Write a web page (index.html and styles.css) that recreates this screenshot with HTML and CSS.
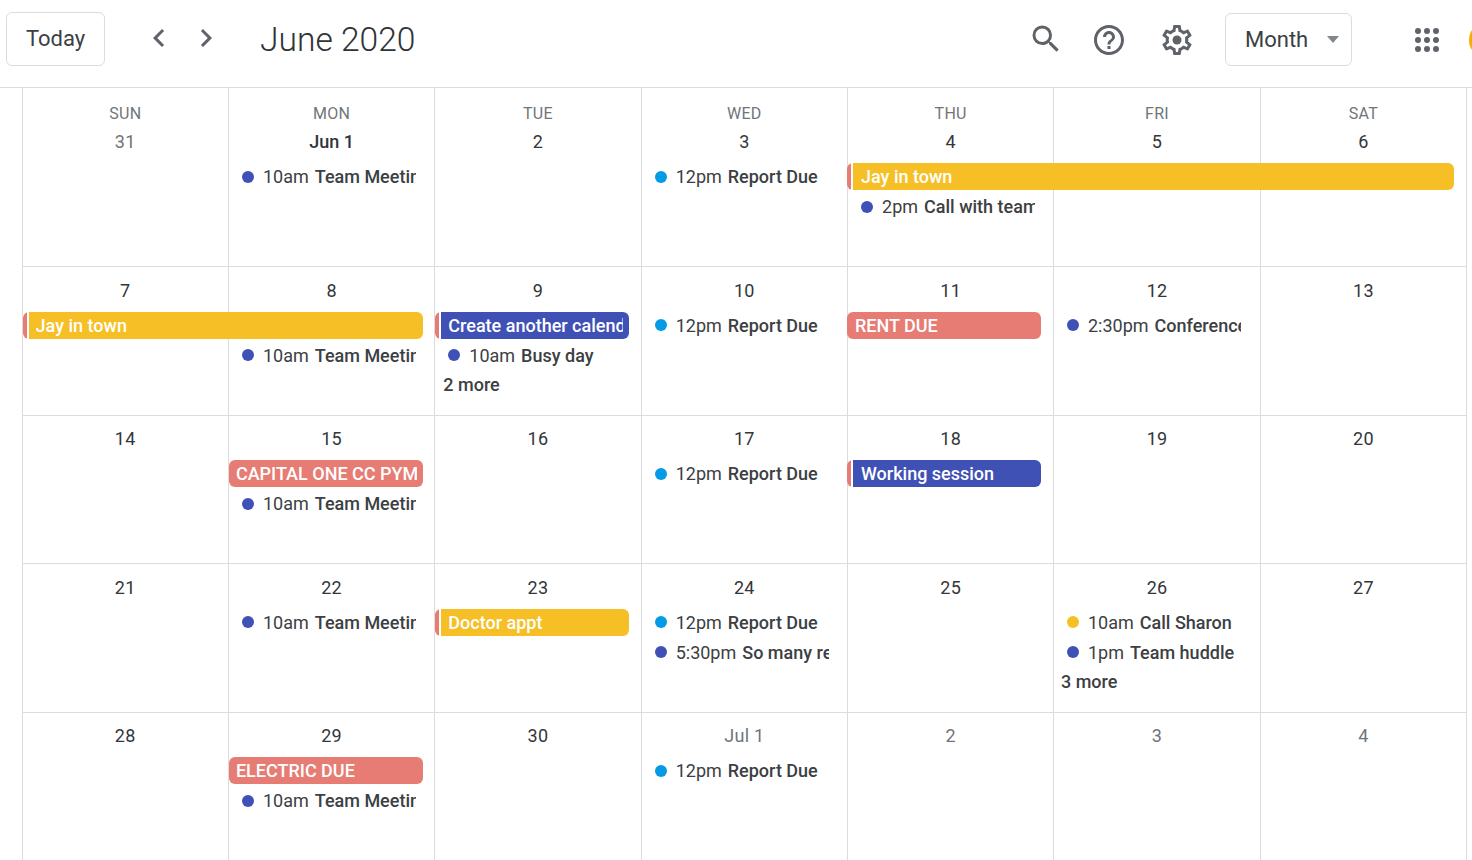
FILE: index.html
```html
<!DOCTYPE html>
<html lang="en">
<head>
  <meta charset="UTF-8" />
  <title>June 2020</title>
  <link rel="stylesheet" href="styles.css">
</head>
<body>
  <header class="toolbar">
    <button class="today-btn">Today</button>
    <svg class="icon nav-prev" viewBox="0 0 24 24"><path d="M15.41 7.41L14 6l-6 6 6 6 1.41-1.41L10.83 12z"/></svg>
    <svg class="icon nav-next" viewBox="0 0 24 24"><path d="M10 6L8.59 7.41 13.17 12l-4.58 4.59L10 18l6-6z"/></svg>
    <h1 class="month-title">June 2020</h1>

    <svg class="icon search" viewBox="0 0 24 24"><path d="M15.5 14h-.79l-.28-.27A6.471 6.471 0 0 0 16 9.5 6.5 6.5 0 1 0 9.5 16c1.61 0 3.09-.59 4.23-1.57l.27.28v.79l5 4.99L20.49 19l-4.99-5zm-6 0C7.01 14 5 11.99 5 9.5S7.01 5 9.5 5 14 7.01 14 9.5 11.99 14 9.5 14z"/></svg>
    <svg class="icon help" viewBox="0 0 24 24"><path d="M11 18h2v-2h-2v2zm1-16C6.48 2 2 6.48 2 12s4.48 10 10 10 10-4.48 10-10S17.52 2 12 2zm0 18c-4.41 0-8-3.59-8-8s3.59-8 8-8 8 3.59 8 8-3.59 8-8 8zm0-14c-2.21 0-4 1.79-4 4h2c0-1.1.9-2 2-2s2 .9 2 2c0 2-3 1.75-3 5h2c0-2.25 3-2.5 3-5 0-2.21-1.79-4-4-4z"/></svg>
    <svg class="icon gear" viewBox="0 0 24 24"><path d="M19.43 12.98c.04-.32.07-.64.07-.98 0-.34-.03-.66-.07-.98l2.11-1.65c.19-.15.24-.42.12-.64l-2-3.46c-.09-.16-.26-.25-.44-.25-.06 0-.12.01-.17.03l-2.49 1c-.52-.4-1.08-.73-1.69-.98l-.38-2.65C14.46 2.18 14.25 2 14 2h-4c-.25 0-.46.18-.49.42l-.38 2.65c-.61.25-1.17.59-1.69.98l-2.49-1c-.06-.02-.12-.03-.18-.03-.17 0-.34.09-.43.25l-2 3.46c-.13.22-.07.49.12.64l2.11 1.65c-.04.32-.07.65-.07.98 0 .33.03.66.07.98l-2.11 1.65c-.19.15-.24.42-.12.64l2 3.46c.09.16.26.25.44.25.06 0 .12-.01.17-.03l2.49-1c.52.4 1.08.73 1.69.98l.38 2.65c.03.24.24.42.49.42h4c.25 0 .46-.18.49-.42l.38-2.65c.61-.25 1.17-.59 1.69-.98l2.49 1c.06.02.12.03.18.03.17 0 .34-.09.43-.25l2-3.46c.12-.22.07-.49-.12-.64l-2.11-1.65zm-1.98-1.71c.04.31.05.52.05.73 0 .21-.02.43-.05.73l-.14 1.13.89.7 1.08.84-.7 1.21-1.27-.51-1.04-.42-.9.68c-.43.32-.84.56-1.25.73l-1.06.43-.16 1.13-.2 1.35h-1.4l-.19-1.35-.16-1.13-1.06-.43c-.43-.18-.83-.41-1.23-.71l-.91-.7-1.06.43-1.27.51-.7-1.21 1.08-.84.89-.7-.14-1.13c-.03-.31-.05-.54-.05-.74s.02-.43.05-.73l.14-1.13-.89-.7-1.08-.84.7-1.21 1.27.51 1.04.42.9-.68c.43-.32.84-.56 1.25-.73l1.06-.43.16-1.13.2-1.35h1.39l.19 1.35.16 1.13 1.06.43c.43.18.83.41 1.23.71l.91.7 1.06-.43 1.27-.51.7 1.21-1.07.85-.89.7.14 1.13z"/><circle cx="12" cy="12" r="3"/></svg>

    <div class="view-select">
      <span>Month</span>
      <i class="caret"></i>
    </div>

    <svg class="icon apps" viewBox="0 0 36 36">
      <circle cx="9" cy="9" r="3"/><circle cx="18" cy="9" r="3"/><circle cx="27" cy="9" r="3"/>
      <circle cx="9" cy="18" r="3"/><circle cx="18" cy="18" r="3"/><circle cx="27" cy="18" r="3"/>
      <circle cx="9" cy="27" r="3"/><circle cx="18" cy="27" r="3"/><circle cx="27" cy="27" r="3"/>
    </svg>
    <div class="avatar"></div>
  </header>

  <main class="month">
    <!-- week of May 31 -->
    <section class="week week-first">
      <div class="day c1"><span class="dow">SUN</span><span class="num dim">31</span></div>
      <div class="day c2"><span class="dow">MON</span><span class="num first">Jun 1</span></div>
      <div class="day c3"><span class="dow">TUE</span><span class="num">2</span></div>
      <div class="day c4"><span class="dow">WED</span><span class="num">3</span></div>
      <div class="day c5"><span class="dow">THU</span><span class="num">4</span></div>
      <div class="day c6"><span class="dow">FRI</span><span class="num">5</span></div>
      <div class="day c7"><span class="dow">SAT</span><span class="num">6</span></div>

      <div class="event c2 r2"><i class="dot blue"></i><span class="time">10am</span><span class="name">Team Meeting</span></div>
      <div class="event c4 r2"><i class="dot sky"></i><span class="time">12pm</span><span class="name">Report Due</span></div>
      <div class="chip yellow striped c5 span3 r2"><div class="fill"><span>Jay in town</span></div></div>
      <div class="event c5 r3"><i class="dot blue"></i><span class="time">2pm</span><span class="name">Call with team</span></div>
    </section>

    <!-- week of June 7 -->
    <section class="week">
      <div class="day c1"><span class="num">7</span></div>
      <div class="day c2"><span class="num">8</span></div>
      <div class="day c3"><span class="num">9</span></div>
      <div class="day c4"><span class="num">10</span></div>
      <div class="day c5"><span class="num">11</span></div>
      <div class="day c6"><span class="num">12</span></div>
      <div class="day c7"><span class="num">13</span></div>

      <div class="chip yellow striped c1 span2 r2"><div class="fill"><span>Jay in town</span></div></div>
      <div class="event c2 r3"><i class="dot blue"></i><span class="time">10am</span><span class="name">Team Meeting</span></div>
      <div class="chip blue striped c3 r2"><div class="fill"><span>Create another calendar</span></div></div>
      <div class="event c3 r3"><i class="dot blue"></i><span class="time">10am</span><span class="name">Busy day</span></div>
      <div class="more c3 r4">2 more</div>
      <div class="event c4 r2"><i class="dot sky"></i><span class="time">12pm</span><span class="name">Report Due</span></div>
      <div class="chip salmon c5 r2"><div class="fill"><span>RENT DUE</span></div></div>
      <div class="event c6 r2"><i class="dot blue"></i><span class="time">2:30pm</span><span class="name">Conference call</span></div>
    </section>

    <!-- week of June 14 -->
    <section class="week">
      <div class="day c1"><span class="num">14</span></div>
      <div class="day c2"><span class="num">15</span></div>
      <div class="day c3"><span class="num">16</span></div>
      <div class="day c4"><span class="num">17</span></div>
      <div class="day c5"><span class="num">18</span></div>
      <div class="day c6"><span class="num">19</span></div>
      <div class="day c7"><span class="num">20</span></div>

      <div class="chip salmon c2 r2"><div class="fill"><span>CAPITAL ONE CC PYMT</span></div></div>
      <div class="event c2 r3"><i class="dot blue"></i><span class="time">10am</span><span class="name">Team Meeting</span></div>
      <div class="event c4 r2"><i class="dot sky"></i><span class="time">12pm</span><span class="name">Report Due</span></div>
      <div class="chip blue striped c5 r2"><div class="fill"><span>Working session</span></div></div>
    </section>

    <!-- week of June 21 -->
    <section class="week">
      <div class="day c1"><span class="num">21</span></div>
      <div class="day c2"><span class="num">22</span></div>
      <div class="day c3"><span class="num">23</span></div>
      <div class="day c4"><span class="num">24</span></div>
      <div class="day c5"><span class="num">25</span></div>
      <div class="day c6"><span class="num">26</span></div>
      <div class="day c7"><span class="num">27</span></div>

      <div class="event c2 r2"><i class="dot blue"></i><span class="time">10am</span><span class="name">Team Meeting</span></div>
      <div class="chip yellow striped c3 r2"><div class="fill"><span>Doctor appt</span></div></div>
      <div class="event c4 r2"><i class="dot sky"></i><span class="time">12pm</span><span class="name">Report Due</span></div>
      <div class="event c4 r3"><i class="dot blue"></i><span class="time">5:30pm</span><span class="name">So many repeats</span></div>
      <div class="event c6 r2"><i class="dot yellow"></i><span class="time">10am</span><span class="name">Call Sharon</span></div>
      <div class="event c6 r3"><i class="dot blue"></i><span class="time">1pm</span><span class="name">Team huddle</span></div>
      <div class="more c6 r4">3 more</div>
    </section>

    <!-- week of June 28 -->
    <section class="week week-last">
      <div class="day c1"><span class="num">28</span></div>
      <div class="day c2"><span class="num">29</span></div>
      <div class="day c3"><span class="num">30</span></div>
      <div class="day c4"><span class="num dim">Jul 1</span></div>
      <div class="day c5"><span class="num dim">2</span></div>
      <div class="day c6"><span class="num dim">3</span></div>
      <div class="day c7"><span class="num dim">4</span></div>

      <div class="chip salmon c2 r2"><div class="fill"><span>ELECTRIC DUE</span></div></div>
      <div class="event c2 r3"><i class="dot blue"></i><span class="time">10am</span><span class="name">Team Meeting</span></div>
      <div class="event c4 r2"><i class="dot sky"></i><span class="time">12pm</span><span class="name">Report Due</span></div>
    </section>
  </main>
</body>
</html>
```

FILE: styles.css
```css
body {
  margin: 0;
  height: 860px;
  overflow: hidden;
  background: #fff;
  font-family: Roboto, sans-serif;
  color: #3c4043;
}

/* top bar */
.toolbar {
  display: flex;
  align-items: center;
  box-sizing: content-box;
  height: 79px;
  padding: 0 0 8px 6px;
  border-bottom: 1px solid #dadce0;
}

.icon {
  flex: none;
  width: 36px;
  height: 36px;
  fill: #5f6368;
}

.today-btn {
  width: 99px;
  height: 54px;
  margin-top: -1px;
  padding: 0 0 2px;
  background: #fff;
  border: 1px solid #dadce0;
  border-radius: 6px;
  font-family: Roboto, sans-serif;
  font-size: 22px;
  color: #3c4043;
}

.nav-prev { margin: -4px 0 0 36px; }
.nav-next { margin: -4px 0 0 11px; }

.month-title {
  flex: 1;
  margin: 0 0 0 36px;
  font-size: 33.6px;
  font-weight: 300;
  color: #303336;
}

.search { margin: -2px 0 0 0; }
.help { margin: 0 0 0 27px; }
.gear { margin: 0 0 0 32px; }

.view-select {
  flex: none;
  display: flex;
  align-items: center;
  box-sizing: border-box;
  width: 127px;
  height: 53px;
  margin-left: 30px;
  padding-left: 19px;
  border: 1px solid #dadce0;
  border-radius: 6px;
  font-size: 22px;
}

.caret {
  width: 0;
  height: 0;
  margin-left: 19px;
  border-left: 6px solid transparent;
  border-right: 6px solid transparent;
  border-top: 7px solid #80868b;
}

.apps { margin-left: 57px; }

.avatar {
  flex: none;
  width: 36px;
  height: 36px;
  margin: 0 -33px 0 24px;
  border-radius: 50%;
  background: #f9ab00;
}

/* month grid */
.month {
  width: 1444.5px;
  margin-left: 21.6px;
}

.week {
  display: grid;
  grid-template-columns: repeat(7, 1fr);
  grid-template-rows: 44.9px 29.7px 29.7px 29.7px 1fr;
  box-sizing: border-box;
  width: calc(100% + 1px);
  height: 148.5px;
  border-right: 1px solid #dadce0;
  border-bottom: 1px solid #dadce0;
}

.week-first {
  grid-template-rows: 75px 30px 30px 30px 1fr;
  height: 179px;
}

.week-last {
  height: 160px;
  border-bottom: 0;
}

.day {
  grid-row: 1 / -1;
  display: flex;
  flex-direction: column;
  align-items: center;
  padding-top: 11.5px;
  border-left: 1px solid #dadce0;
  font-size: 18px;
}

.week-first .day { padding-top: 15px; }

.dow {
  height: 22px;
  margin-bottom: 5px;
  font-size: 16px;
  letter-spacing: 0.3px;
  line-height: 22px;
  color: #70757a;
}

.num {
  letter-spacing: 0.3px;
  line-height: 24px;
  color: #33363a;
}

.num.first { font-weight: 500; letter-spacing: 0; }
.num.dim { color: #70757a; }

.c1 { grid-column: 1; }
.c2 { grid-column: 2; }
.c3 { grid-column: 3; }
.c4 { grid-column: 4; }
.c5 { grid-column: 5; }
.c6 { grid-column: 6; }
.c7 { grid-column: 7; }
.c1.span2 { grid-column: 1 / span 2; }
.c5.span3 { grid-column: 5 / span 3; }
.r2 { grid-row: 2; }
.r3 { grid-row: 3; }
.r4 { grid-row: 4; }

/* all-day chips */
.chip {
  display: flex;
  height: 27px;
  margin: 0 12px 0 1px;
  border-radius: 6px;
  overflow: hidden;
  font-size: 18px;
  font-weight: 500;
  line-height: 27px;
  color: #fff;
  min-width: 0;
}

.chip.c2, .chip.span2 { margin-right: 11.5px; }
.chip.c5 { margin-left: 0; }

.chip.striped::before {
  content: "";
  flex: none;
  width: 4px;
  margin-right: 2px;
  background: #e67c73;
}

.fill {
  flex: 1;
  min-width: 0;
  padding: 0 6px 0 7px;
}

.chip.c5 .fill { padding-left: 8px; }

.fill span {
  display: block;
  overflow: hidden;
  white-space: nowrap;
}

.chip.yellow .fill { background: #f6bf26; }
.chip.blue .fill { background: #3f51b5; }
.chip.salmon .fill { background: #e67c73; }

/* timed events */
.event {
  display: flex;
  align-items: center;
  height: 27px;
  margin: 0 18px 0 14px;
  overflow: hidden;
  white-space: nowrap;
  font-size: 18px;
  min-width: 0;
}

.event.c6 { margin: 0 19px 0 13.6px; }

.dot {
  flex: none;
  width: 12px;
  height: 12px;
  margin-right: 9px;
  border-radius: 50%;
}

.dot.blue { background: #3f51b5; }
.dot.sky { background: #039be5; }
.dot.yellow { background: #f6bf26; }

.time {
  flex: none;
  margin-right: 6px;
}

.name {
  flex: none;
  font-weight: 500;
}

.more {
  margin-left: 9px;
  font-size: 18px;
  font-weight: 500;
  line-height: 27px;
}

.more.c6 { margin-left: 7.6px; }
```
